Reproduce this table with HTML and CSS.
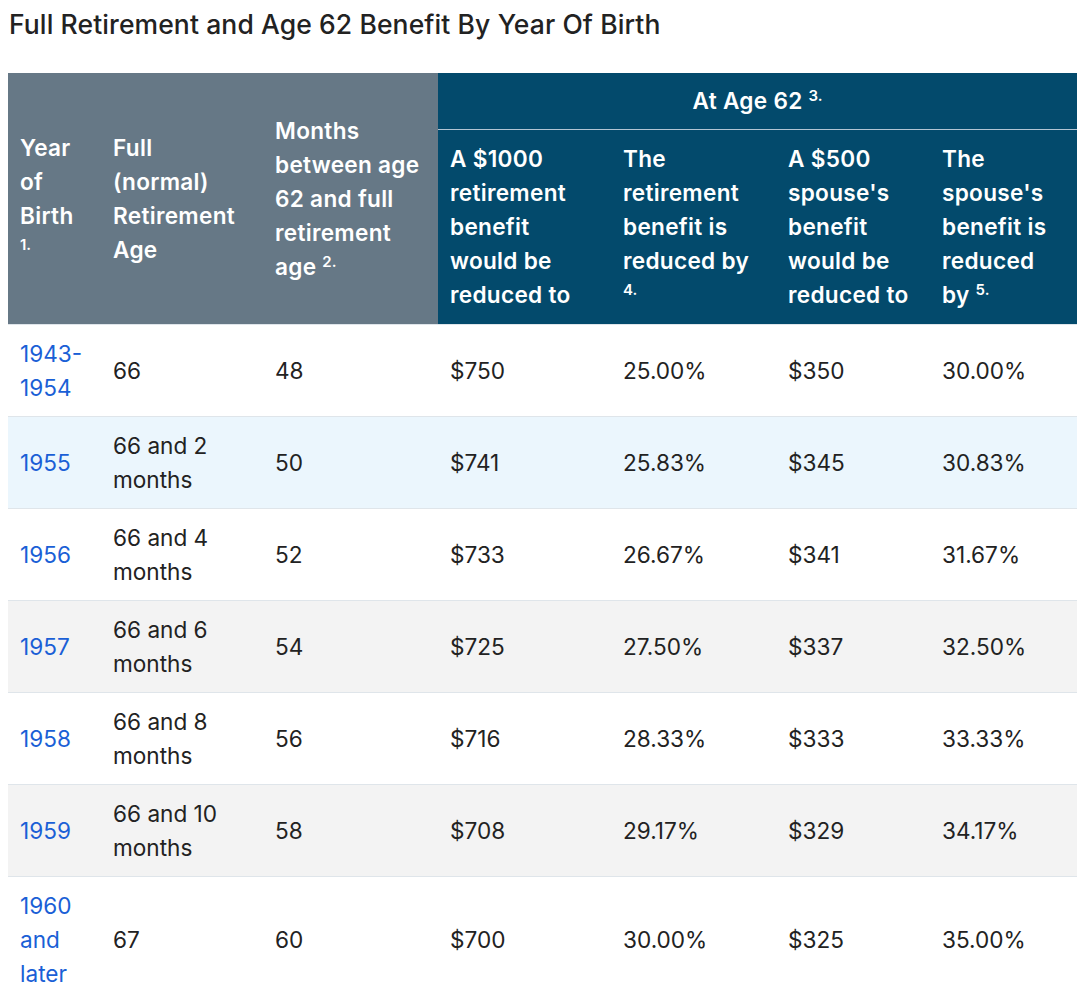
FILE: index.html
```html
<!DOCTYPE html>
<html lang="en">
<head>
<meta charset="utf-8">
<title>Full Retirement and Age 62 Benefit By Year Of Birth</title>
<link rel="stylesheet" href="styles.css">
</head>
<body>
<h2 class="title">Full Retirement and Age 62 Benefit By Year Of Birth</h2>
<table class="benefits">
  <colgroup>
    <col class="c1"><col class="c2"><col class="c3"><col class="c4"><col class="c5"><col class="c6"><col class="c7">
  </colgroup>
  <thead>
    <tr>
      <th rowspan="2" class="gray">Year of Birth <sup>1.</sup></th>
      <th rowspan="2" class="gray">Full (normal) Retirement Age</th>
      <th rowspan="2" class="gray">Months between age 62 and full retirement age <sup>2.</sup></th>
      <th colspan="4" class="navy group">At Age 62 <sup>3.</sup></th>
    </tr>
    <tr>
      <th class="navy">A $1000 retirement benefit would be reduced to</th>
      <th class="navy">The retirement benefit is reduced by <sup>4.</sup></th>
      <th class="navy">A $500 spouse's benefit would be reduced to</th>
      <th class="navy">The spouse's benefit is reduced by <sup>5.</sup></th>
    </tr>
  </thead>
  <tbody>
    <tr><td><a href="#">1943-1954</a></td><td>66</td><td>48</td><td>$750</td><td>25.00%</td><td>$350</td><td>30.00%</td></tr>
    <tr class="hl"><td><a href="#">1955</a></td><td>66 and 2 months</td><td>50</td><td>$741</td><td>25.83%</td><td>$345</td><td>30.83%</td></tr>
    <tr><td><a href="#">1956</a></td><td>66 and 4 months</td><td>52</td><td>$733</td><td>26.67%</td><td>$341</td><td>31.67%</td></tr>
    <tr class="alt"><td><a href="#">1957</a></td><td>66 and 6 months</td><td>54</td><td>$725</td><td>27.50%</td><td>$337</td><td>32.50%</td></tr>
    <tr><td><a href="#">1958</a></td><td>66 and 8 months</td><td>56</td><td>$716</td><td>28.33%</td><td>$333</td><td>33.33%</td></tr>
    <tr class="alt"><td><a href="#">1959</a></td><td>66 and 10 months</td><td>58</td><td>$708</td><td>29.17%</td><td>$329</td><td>34.17%</td></tr>
    <tr><td><a href="#">1960 and later</a></td><td>67</td><td>60</td><td>$700</td><td>30.00%</td><td>$325</td><td>35.00%</td></tr>
  </tbody>
</table>
</body>
</html>
```

FILE: styles.css
```css
html, body {
  margin: 0;
  padding: 0;
  background: #ffffff;
}
body {
  padding: 0 3px 0 8px;
  font-family: Inter, "Noto Sans", "Liberation Sans", sans-serif;
  color: #222222;
}
.title {
  margin: 0;
  padding: 8px 0 0 1px;
  height: 73px;
  box-sizing: border-box;
  font-size: 26.5px;
  font-weight: 500;
  line-height: 32px;
  color: #222222;
  letter-spacing: 0.1px;
}
.benefits {
  border-collapse: collapse;
  table-layout: fixed;
  width: 1069px;
  font-size: 22.6px;
  line-height: 34px;
}
.c1 { width: 93px; }
.c2 { width: 162px; }
.c3 { width: 175px; }
.c4 { width: 173px; }
.c5 { width: 165px; }
.c6 { width: 154px; }
.c7 { width: 147px; }
.benefits th {
  text-align: left;
  font-weight: 600;
  color: #ffffff;
  padding: 12px 12px;
  vertical-align: middle;
  letter-spacing: 0.3px;
}
.benefits th.gray {
  background: #667886;
}
.benefits th.navy {
  background: #034a6c;
  vertical-align: top;
}
.benefits th.group {
  text-align: center;
  padding: 11px 12px;
  border-bottom: 1px solid #b3c5d3;
}
.benefits sup {
  font-size: 15px;
  line-height: 0;
  vertical-align: 8px;
  letter-spacing: 0;
}
.benefits td {
  padding: 12px 12px 11px;
  vertical-align: middle;
  border-top: 1px solid #dfe5ea;
  background: #ffffff;
}
.benefits tbody tr:last-child td {
  border-bottom: 1px solid #dfe5ea;
}
.benefits tr.hl td { background: #ebf6fd; }
.benefits tr.alt td { background: #f3f3f3; }
.benefits a {
  color: #1a5fd6;
  text-decoration: none;
}
```
